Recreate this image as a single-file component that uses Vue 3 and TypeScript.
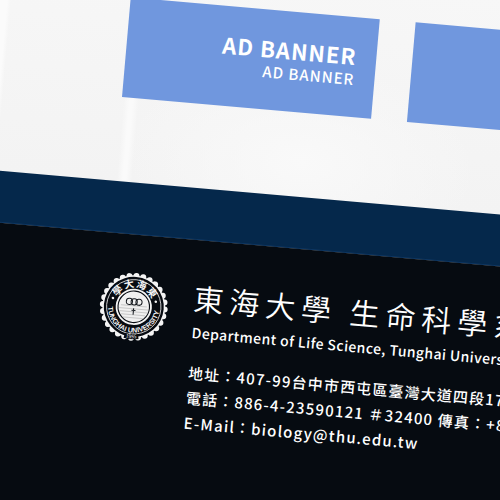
<script setup lang="ts">
interface Banner {
  id: number
  title: string
  subtitle: string
}

const banners: Banner[] = [
  { id: 1, title: 'AD BANNER', subtitle: 'AD BANNER' },
  { id: 2, title: 'AD BANNER', subtitle: 'AD BANNER' },
]

// Scalloped rim of the university seal
const lobes = 28
const rim = Array.from({ length: lobes }, (_, i) => {
  const angle = (i / lobes) * Math.PI * 2
  return { x: 35 + Math.cos(angle) * 31, y: 35 + Math.sin(angle) * 31 }
})
</script>

<template>
  <div class="stage">
    <div class="page">
      <main class="banners">
        <a v-for="banner in banners" :key="banner.id" class="banner" href="#">
          <strong class="banner-title">{{ banner.title }}</strong>
          <span class="banner-subtitle">{{ banner.subtitle }}</span>
        </a>
      </main>
      <div class="band"></div>
      <footer class="footer">
        <svg class="seal" viewBox="0 0 70 70" role="img" aria-label="Tunghai University">
          <defs>
            <path id="seal-top" d="M15.5 35 A19.5 19.5 0 0 1 54.5 35" />
            <path id="seal-bottom" d="M9.200 35 A25.8 25.8 0 0 0 60.800 35" />
            <path id="seal-year" d="M3.5 35 A31.5 31.5 0 0 0 66.5 35" />
          </defs>
          <circle cx="35" cy="35" r="31.5" fill="#f4f4f4" />
          <circle v-for="(lobe, i) in rim" :key="i" :cx="lobe.x" :cy="lobe.y" r="3" fill="#f4f4f4" />
          <circle cx="35" cy="35" r="30" fill="#070b11" />
          <circle cx="35" cy="35" r="27.2" fill="none" stroke="#dcdcdc" stroke-width="0.9" />
          <text class="seal-cjk"><textPath href="#seal-top" startOffset="50%" text-anchor="middle">學大海東</textPath></text>
          <text class="seal-latin"><textPath href="#seal-bottom" startOffset="50%" text-anchor="middle">TUNGHAI UNIVERSITY</textPath></text>
          <path d="M28 64.200 A30 30 0 0 0 42 64.200" fill="none" stroke="#070b11" stroke-width="5" />
          <text class="seal-year"><textPath href="#seal-year" startOffset="50%" text-anchor="middle">1955</textPath></text>
          <circle cx="13.500" cy="28" r="1.3" fill="#f4f4f4" />
          <circle cx="56.500" cy="28" r="1.3" fill="#f4f4f4" />
          <circle cx="35" cy="35" r="17.200" fill="#070b11" stroke="#f4f4f4" stroke-width="1.8" />
          <circle cx="35" cy="35" r="15.2" fill="#f0f0f0" />
          <path d="M22 34H48M20.500 37H49.500M21 40H49M23 43H47M25 46H45" stroke="#b8b8b8" stroke-width="0.7" />
          <g fill="none" stroke="#15191e" stroke-width="1">
            <circle cx="30.200" cy="30" r="3.100" />
            <circle cx="35" cy="30" r="3.100" />
            <circle cx="39.800" cy="30" r="3.100" />
            <path d="M35 36.500V43M33 38.500H37" />
          </g>
        </svg>
        <div class="details">
          <h1 class="name">東海大學 生命科學系</h1>
          <p class="english">Department of Life Science, Tunghai University</p>
          <address class="contact">
            <p>地址：407-99台中市西屯區臺灣大道四段1727號</p>
            <p>電話：886-4-23590121 ＃32400 傳真：+886-4-23590296</p>
            <p>E-Mail：<a href="mailto:biology@thu.edu.tw">biology@thu.edu.tw</a></p>
          </address>
        </div>
      </footer>
    </div>
  </div>
</template>

<style>
body {
  margin: 0;
}
</style>

<style scoped>
.stage {
  height: 100vh;
  overflow: hidden;
  background: #f5f5f5;
  font-family: "Noto Sans CJK TC", "Noto Sans", sans-serif;
}

.page {
  display: flex;
  flex-direction: column;
  box-sizing: border-box;
  width: calc(100% + 60px);
  min-height: calc(100% + 60px);
  margin: -48px 0 0;
  transform: rotate(5deg);
  transform-origin: 0 48px;
}

.banners {
  display: flex;
  gap: 36px;
  padding: 34px 0 84px 130px;
  background:
    linear-gradient(90deg, #fbfbfb 7px, transparent 11px),
    linear-gradient(90deg, transparent 132px, #fafafa 138px, #fafafa 141px, transparent 147px),
    radial-gradient(ellipse at 56% 84%, #f9f9f9, transparent 40%),
    linear-gradient(#f7f7f7, #f3f3f3);
}

.banner {
  display: flex;
  flex: 0 0 250px;
  flex-direction: column;
  align-items: flex-end;
  box-sizing: border-box;
  height: 100px;
  padding: 24px 20px 0 0;
  background: #7097de;
  color: #fff;
  text-decoration: none;
}

.banner-title {
  font-size: 22px;
  line-height: 28px;
  letter-spacing: 1px;
}

.banner-subtitle {
  font-size: 15px;
  font-weight: 500;
  line-height: 20px;
  letter-spacing: 1px;
}

.band {
  box-sizing: border-box;
  height: 52px;
  background: #05284b;
  border-bottom: 1px solid #0e3763;
}

.footer {
  display: flex;
  flex: 1;
  gap: 24px;
  align-items: flex-start;
  padding: 37px 0 0 125px;
  background: #060b11;
  color: #fff;
}

.seal {
  flex: none;
  width: 70px;
  height: 70px;
}

.seal-cjk {
  fill: #f4f4f4;
  font-size: 10px;
  font-weight: 700;
  letter-spacing: 1px;
}

.seal-latin {
  fill: #f4f4f4;
  font-family: "Liberation Sans", sans-serif;
  font-size: 7px;
  font-weight: 700;
}

.seal-year {
  fill: #f4f4f4;
  font-size: 5px;
}

.details {
  white-space: nowrap;
}

.name {
  margin: 0;
  font-size: 30px;
  font-weight: 350;
  line-height: 40px;
  letter-spacing: 6px;
}

.english {
  margin: 3px 0 0;
  padding-left: 1px;
  font-size: 14px;
  font-weight: 500;
  line-height: 24px;
  letter-spacing: 0.03em;
}

.contact {
  margin-top: 16px;
  padding-left: 1px;
  font-size: 15px;
  font-style: normal;
  font-weight: 500;
  line-height: 25px;
  letter-spacing: 0.08em;
}

.contact p {
  margin: 0;
}

.contact a {
  color: inherit;
  text-decoration: none;
}
</style>
